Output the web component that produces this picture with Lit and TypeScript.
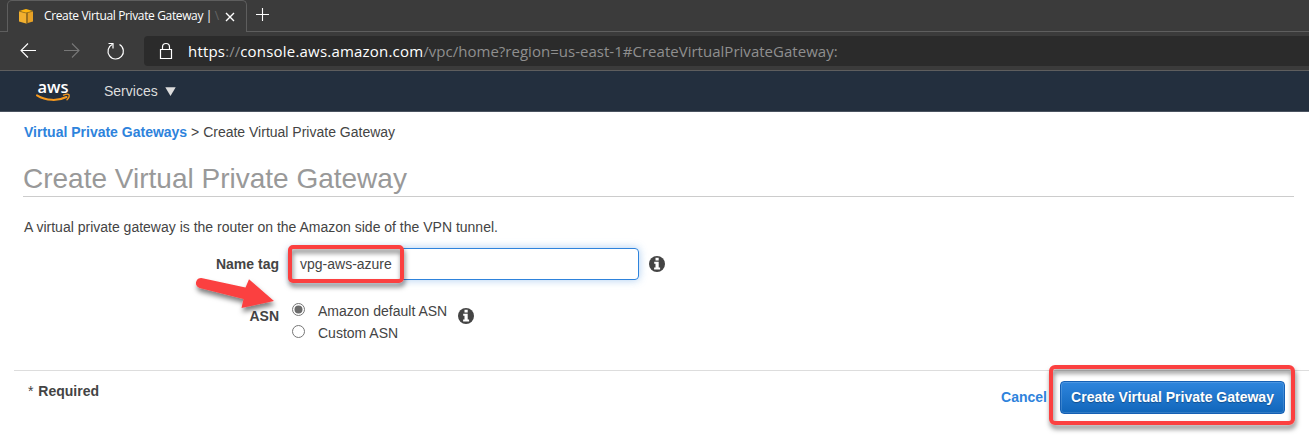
import { LitElement, html, css, svg } from "lit";
import { customElement, property } from "lit/decorators.js";

@customElement("browser-chrome")
class BrowserChrome extends LitElement {
  static styles = css`
    :host { display: block; background: #3b3b3b; font-family: "Open Sans", "Noto Sans", sans-serif; color: #fff; }
    .strip { display: flex; height: 32px; align-items: stretch; }
    .edge { width: 7px; border-bottom: 1px solid #5e5e5e; box-sizing: border-box; }
    .tab { width: 240px; box-sizing: border-box; border: 1px solid #5e5e5e; border-bottom: 0; border-radius: 5px 5px 0 0; display: flex; align-items: center; padding: 0 0 1px 10px; background: #3b3b3b; }
    .fav { width: 16px; height: 16px; margin-right: 10px; flex: none; }
    .title { font-size: 12px; letter-spacing: -0.36px; white-space: nowrap; width: 176px; flex: none; line-height: 18px; }
    .fade { color: #666; }
    .close { width: 10px; height: 10px; margin-left: 5px; margin-top: 2px; }
    .rest { flex: 1; border-bottom: 1px solid #5e5e5e; box-sizing: border-box; padding: 8px 0 0 8px; }
    .rest svg { display: block; }
    .bar { display: flex; height: 39px; box-sizing: border-box; border-bottom: 1px solid #5e5e5e; }
    .nav { display: block; width: 144px; height: 38px; flex: none; }
    .address { flex: 1; height: 30px; margin-top: 4px; background: #2b2b2b; border-radius: 4px 0 0 4px; display: flex; align-items: center; }
    .lock { width: 16px; height: 20px; margin: 0 14px 0 14px; }
    .url { font-size: 15px; line-height: 30px; white-space: nowrap; color: #8f8f8f; letter-spacing: .02px; margin-top: -1px; }
    .url b { font-weight: 400; color: #fff; letter-spacing: .2px; }
  `;
  render() {
    return html`
      <div class="strip">
        <div class="edge"></div>
        <div class="tab">
          <svg class="fav" viewBox="0 0 16 16">
            <path d="M1 3.2 8 5v10.5L1 13.6z" fill="#f2b02f" /><path d="M15 3.2 8 5v10.5l7-1.9z" fill="#e7a125" />
            <path d="M1 3 8 1l7 2-7 2z" fill="#ffb50e" /><path d="M8 5v10.5l2-.5V4.5z" fill="#9a701f" /><path d="M1 3.2 8 5l7-1.8" fill="none" stroke="#94701e" stroke-width=".7" />
          </svg>
          <span class="title">Create Virtual Private Gateway | <span class="fade">\\</span></span>
          <svg class="close" viewBox="0 0 10 10"><path d="m1 1 8 8M9 1 1 9" stroke="#fff" stroke-width="1.4" /></svg>
        </div>
        <div class="rest"><svg width="15" height="13"><path d="M1 6.5h13M7.5 0v13" stroke="#fff" stroke-width="1.1" /></svg></div>
      </div>
      <div class="bar">
        <svg class="nav" viewBox="0 32 144 38" fill="none" stroke="#fff" stroke-width="1.1">
          <path d="M36 50.5H21M28 43.5l-7 7 7 7" /><path d="M64 50.5h15M72 43.5l7 7-7 7" stroke="#777" />
          <path d="M112.5 44.3A7.700 7.700 0 1 0 119.500 44.600" stroke-width="1.2" /><path d="M108.500 43.5h4.500v5" stroke-width="1.2" />
        </svg>
        <div class="address">
          <svg class="lock" viewBox="0 0 16 20" fill="none" stroke="#fff" stroke-width="1.2"><path d="M2.5 8.5h11v9h-11zM4.5 8.500V6a3.500 3.500 0 0 1 7 0v2.500" /></svg>
          <span class="url"><b>https</b>://<b>console.aws.amazon.com</b>/vpc/home?region=us-east-1#CreateVirtualPrivateGateway:</span>
        </div>
      </div>`;
  }
}

@customElement("aws-nav")
class AwsNav extends LitElement {
  static styles = css`
    :host { display: flex; height: 41px; box-sizing: border-box; border-bottom: 1px solid #4a5360; background: #232f3e; align-items: center; padding-left: 36px; font: 14px "Liberation Sans", Arial, sans-serif; color: #ddd; }
    .logo { width: 36px; height: 28px; margin-right: 32px; overflow: visible; }
    .word { font: 600 17px "Open Sans", sans-serif; }
    .caret { width: 11px; height: 9px; margin-left: 7px; }
  `;
  render() {
    return html`
      <svg class="logo" viewBox="0 0 36 28">
        <text class="word" x="1.500" y="15.500" textLength="31" lengthAdjust="spacingAndGlyphs" fill="#fff">aws</text>
        <path d="M1 18.300C10 24 22 24.200 30.500 20" fill="none" stroke="#f79a1e" stroke-width="2" stroke-linecap="round" />
        <path d="M27.500 18.200c3-1.300 5-1 5.500-.5.400.8-.3 3.300-2 5" fill="none" stroke="#f79a1e" stroke-width="1.300" stroke-linecap="round" />
      </svg>
      <span>Services</span>
      <svg class="caret" viewBox="0 0 11 9"><path d="M.3.300h10.400L5.500 9z" fill="#ddd" /></svg>`;
  }
}

@customElement("info-icon")
class InfoIcon extends LitElement {
  static styles = css`:host, svg { display: block; width: 16px; height: 16px; }`;
  render() {
    return html`<svg viewBox="0 0 16 16"><circle cx="8" cy="8" r="8" fill="#444" />
      <path d="M6.500 1.800h3.200v2.700H6.500zM5.200 5.800h4.500v5.700h1.400v2H5.100v-2h1.400V7.700H5.200z" fill="#fff" /></svg>`;
  }
}

@customElement("radio-option")
class RadioOption extends LitElement {
  @property({ type: Boolean }) checked = false;
  @property() label = "";
  static styles = css`
    :host { display: flex; height: 22px; align-items: center; }
    svg { width: 13px; height: 13px; margin: 0 13px 4px 0; }
    span { line-height: 20px; white-space: nowrap; }
  `;
  render() {
    return html`<svg viewBox="0 0 13 13"><circle cx="6.500" cy="6.500" r="6" fill="#fff" stroke="#767676" />
      ${this.checked ? svg`<circle cx="6.500" cy="6.500" r="4" fill="#6b6b6b" />` : ""}</svg><span>${this.label}</span>`;
  }
}

@customElement("app-root")
class AppRoot extends LitElement {
  static styles = css`
    :host { display: block; position: relative; width: 1309px; height: 440px; overflow: hidden; background: #fff; color: #444; font: 14px/20px "Liberation Sans", Arial, sans-serif; }
    .head { padding: 10px 15px 0 24px; }
    a { color: #2e83dc; font-weight: 700; }
    h1 { margin: 20px 0 0 -1px; height: 34px; line-height: 33px; font-size: 28px; font-weight: 400; color: #999; border-bottom: 1px solid #ccc; }
    .desc { margin: 20px 0 11px; }
    .row { display: flex; }
    .label { width: 279px; margin-right: 10px; text-align: right; font-weight: 700; }
    .name { align-items: center; height: 32px; }
    .field { width: 350px; height: 32px; box-sizing: border-box; border: 1px solid #2e83dc; border-radius: 4px; padding: 5px 10px; box-shadow: 0 0 8px rgba(46, 131, 220, .4); margin-right: 10px; }
    .asn { margin-top: 20px; height: 70px; }
    .asn .label { margin-right: 13px; padding-top: 6px; }
    .asn info-icon { margin: 8px 0 0 11px; }
    .foot { border-top: 1px solid #ddd; margin-left: 14px; display: flex; padding: 10px 24px 0 14px; }
    .req { flex: 1; font-weight: 700; }
    .req span { font-weight: 400; margin-right: 1px; }
    .cancel { margin: 6px 13px 0 0; }
    .submit { width: 225px; height: 33px; box-sizing: border-box; border: 1px solid #1560b5; border-radius: 4px; background: linear-gradient(#2e85dd, #1166bb); color: #fff; font: 700 14px/31px "Liberation Sans", Arial, sans-serif; padding: 0; box-shadow: inset 0 0 0 1px rgba(255, 255, 255, .14); text-shadow: 0 1px 1px rgba(0, 0, 0, .3); }
    .marks { position: absolute; left: 0; top: 0; }
  `;
  render() {
    return html`
      <browser-chrome></browser-chrome>
      <aws-nav></aws-nav>
      <div class="head">
        <div><a>Virtual Private Gateways</a> &gt; Create Virtual Private Gateway</div>
        <h1>Create Virtual Private Gateway</h1>
        <div class="desc">A virtual private gateway is the router on the Amazon side of the VPN tunnel.</div>
      </div>
      <div class="row name"><div class="label">Name tag</div><div class="field">vpg-aws-azure</div><info-icon></info-icon></div>
      <div class="row asn">
        <div class="label">ASN</div>
        <div><radio-option checked label="Amazon default ASN"></radio-option><radio-option label="Custom ASN"></radio-option></div>
        <info-icon></info-icon>
      </div>
      <div class="foot">
        <div class="req"><span>*</span> Required</div>
        <a class="cancel">Cancel</a>
        <button class="submit">Create Virtual Private Gateway</button>
      </div>
      <svg class="marks" width="1309" height="440" fill="none">
        <defs><filter id="drop" x="-20%" y="-30%" width="140%" height="180%"><feDropShadow dx="1" dy="4" stdDeviation="2.500" flood-color="#000" flood-opacity=".5" /></filter></defs>
        <g filter="url(#drop)" stroke="#fb4141" stroke-width="4">
          <rect x="290" y="247" width="112" height="34" rx="3" />
          <rect x="1051" y="367" width="242" height="56" rx="4" />
        </g>
        <path filter="url(#drop)" fill="#fb4141" d="M202.500 278.200 245.500 287.600 249 279.300 274 301 241.500 308 243.500 299 199.600 288A5 5 0 0 1 202.500 278.200z" />
      </svg>`;
  }
}
